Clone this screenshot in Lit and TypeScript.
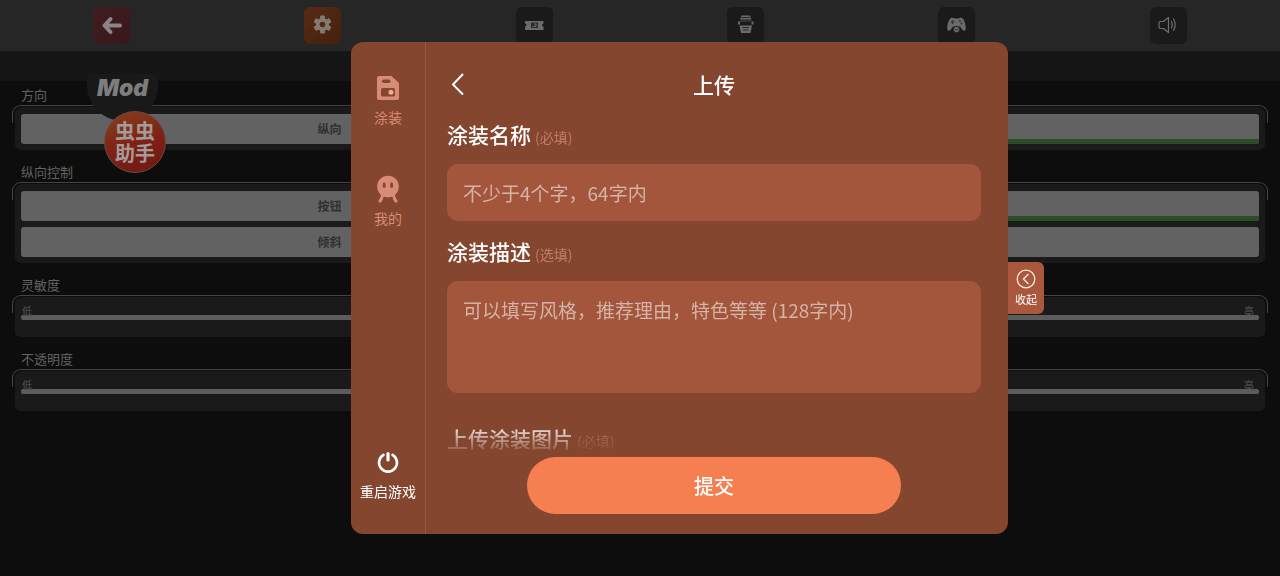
import { LitElement, html, css, svg, nothing } from "lit";
import { customElement, property } from "lit/decorators.js";
import { classMap } from "lit/directives/class-map.js";

const reset = css`
  * { box-sizing: border-box; }
  button, input, textarea {
    font: inherit;
    color: inherit;
    border: 0;
    margin: 0;
    padding: 0;
    background: none;
  }
  button { cursor: pointer; }
  svg { display: block; }
`;

type Tool = { id: string; label: string; tone: string; icon: unknown };

const tools: Tool[] = [
  {
    id: "back", label: "返回", tone: "red",
    icon: svg`<path d="M17.500 12 L11.500 18.500 L17.500 25 M12.500 18.500 H27" fill="none" stroke="#8c8585" stroke-width="4" stroke-linecap="round" stroke-linejoin="round"/>`,
  },
  {
    id: "settings", label: "设置", tone: "orange",
    icon: svg`<g transform="translate(18.500 17.500)" fill="#857a73">
      <circle r="6.500"/>
      ${[0, 60, 120, 180, 240, 300].map((a) => svg`<rect x="-2.400" y="-9" width="4.800" height="5" rx="1.200" transform="rotate(${a})"/>`)}
      <circle r="2.800" fill="#4f2a14"/></g>`,
  },
  {
    id: "ticket", label: "关卡", tone: "plain",
    icon: svg`<path d="M9 14h18.500v2.500a1.500 1.500 0 0 0 0 3V23H9v-3.500a1.500 1.500 0 0 0 0-3z" fill="#6b6b6b"/><rect x="15" y="15.500" width="7" height="5.500" fill="#2c2c2c"/><path d="M16.500 19.500h3.500v-2.500h-2" fill="none" stroke="#6b6b6b" stroke-width="1"/>`,
  },
  {
    id: "vehicle", label: "车辆", tone: "plain",
    icon: svg`<g fill="#6b6b6b"><path d="M14.500 8.500h8.500l1.500 4H13z"/><path d="M11 14.500h2v3h-2z M24.500 14.500h2v3h-2z"/><path d="M13 13.500h11.500v1H13z" opacity=".6"/><path d="M12.500 18.500h12.500l-1.500 7.500h-9.500z"/></g><path d="M14 10.500h9.500M15.500 20.500h6.500M16 23h5.500" stroke="#2a2a2a"/>`,
  },
  {
    id: "control", label: "操控", tone: "plain",
    icon: svg`<path d="M13 11c2-1 3 .5 5.500.5S22 10 24 11c2.500 1 4.500 9 3.500 12-1 2-4-.500-5.500-3.500h-7C13.500 22.500 10.500 25 9.500 23c-1-3 1-11 3.500-12z" fill="#6b6b6b"/><path d="M12.500 15h4M14.500 13v4" stroke="#333" stroke-width="1.200"/><circle cx="22" cy="14" r="1" fill="#333"/><circle cx="23.500" cy="16.500" r="1" fill="#333"/><circle cx="18.500" cy="22.500" r="3.200" fill="#6b6b6b" stroke="#1d1d1d"/><path d="M17 22.500h3" stroke="#333"/>`,
  },
  {
    id: "sound", label: "声音", tone: "plain",
    icon: svg`<g fill="none" stroke="#6f6f6f" stroke-width="1.200" stroke-linejoin="round" stroke-linecap="round"><path d="M18.500 10.500l-5 4H10.500a1.500 1.500 0 0 0-1.500 1.500v4a1.500 1.500 0 0 0 1.500 1.500h3l5 4z"/><path d="M21.500 14.500c1 2 1 4.500 0 6.500M23.500 12c2 3.500 2 8 0 11.500"/></g>`,
  },
];

@customElement("option-group")
class OptionGroup extends LitElement {
  @property() heading = "";
  @property({ attribute: false }) rows: { label: string; other: string; picked: boolean }[] = [];
  @property({ type: Boolean }) slider = false;

  static styles = [reset, css`
    :host { display: block; }
    .heading {
      margin: 0;
      padding: 0 9px;
      height: 32px;
      display: flex;
      align-items: flex-end;
      font-size: 13px;
      font-weight: 400;
      line-height: 20px;
      color: #626262;
    }
    .frame { position: relative; padding: 0 3px; }
    .frame::before {
      content: "";
      position: absolute;
      inset: 0 0 auto;
      height: 17px;
      border: 1px solid #444;
      border-bottom: 0;
      border-radius: 9px 9px 0 0;
    }
    .panel {
      border: 2px solid transparent;
      border-width: 2px 0 0;
      background: #1a1a1a padding-box;
      border-radius: 8px 8px 5px 5px;
      padding: 7px 6px 6px;
      display: grid;
      gap: 6px;
    }
    .row {
      display: grid;
      grid-template-columns: 1fr 1fr;
      column-gap: 4px;
      height: 30px;
      border-radius: 3px;
      overflow: hidden;
      background: #626262;
    }
    .choice { font-size: 12px; font-weight: 700; line-height: 30px; color: #303030; }
    .picked { border-bottom: 5px solid #2f4b28; }
    .range { display: block; height: 27px; }
    .ends {
      display: flex;
      justify-content: space-between;
      padding: 0 1px;
      height: 11px;
      font-size: 10px;
      font-weight: 500;
      line-height: 14px;
      color: #4b4b4b;
    }
    .high { padding-right: 4px; }
    .track {
      display: block;
      width: 100%;
      height: 5px;
      appearance: none;
      background: #5c5c5c;
      border-radius: 2px;
    }
    .track::-webkit-slider-thumb {
      appearance: none;
      width: 14px;
      height: 14px;
      border-radius: 50%;
      background: #626262;
    }
  `];

  render() {
    return html`
      <h2 class="heading">${this.heading}</h2>
      <div class="frame"><div class="panel">
        ${this.rows.map((r) => html`<div class="row">
          <button class="choice">${r.label}</button>
          <button class=${classMap({ choice: true, picked: r.picked })} aria-label=${r.other}></button>
        </div>`)}
        ${this.slider ? html`<label class="range">
          <span class="ends"><span>低</span><span class="high">高</span></span>
          <input class="track" type="range" min="0" max="100" value="50" aria-label=${this.heading}>
        </label>` : nothing}
      </div></div>`;
  }
}

@customElement("game-settings")
class GameSettings extends LitElement {
  static styles = [reset, css`
    :host { display: block; min-height: 100vh; background: #0d0d0d; }
    .bar {
      display: grid;
      grid-template-columns: repeat(6, 1fr);
      justify-items: center;
      align-items: center;
      height: 51px;
      padding: 0 6px;
      background: #262626;
    }
    .tool { width: 37px; height: 37px; border-radius: 6px; background: #1a1a1a; }
    .red { background: linear-gradient(135deg, #421d20, #38171a); }
    .orange { background: linear-gradient(135deg, #582c14, #43200e); }
    .band { height: 30px; background: #151515; }
    .list { padding: 0 12px; margin-top: -8px; position: relative; }
    .logo { position: absolute; left: 87px; top: 50px; width: 80px; }
    .mod {
      width: 71px;
      height: 71px;
      padding-top: 4px;
      border-radius: 50%;
      background: #191919;
      display: grid;
      place-items: center;
      clip-path: inset(24px 0 0);
      font: italic 900 23px/28px Inter, sans-serif;
      color: #7d7d7d;
    }
    .helper {
      position: absolute;
      left: 17px;
      top: 61px;
      width: 62px;
      height: 62px;
      border: 1px solid #6b4a40;
      border-radius: 50%;
      background: linear-gradient(160deg, #87401c, #7e2015 55%, #701812);
      display: grid;
      place-content: center;
      font-size: 20px;
      font-weight: 700;
      line-height: 22px;
      color: #a39b99;
    }
  `];

  render() {
    return html`
      <nav class="bar">
        ${tools.map((t) => html`<button class="tool ${t.tone}" aria-label=${t.label}>
          <svg width="37" height="37" viewBox="0 0 37 37">${t.icon}</svg></button>`)}
      </nav>
      <div class="band"></div>
      <main class="list">
        <option-group heading="方向" .rows=${[{ label: "纵向", other: "横向", picked: true }]}></option-group>
        <option-group heading="纵向控制" .rows=${[
          { label: "按钮", other: "滑块", picked: true },
          { label: "倾斜", other: "方向盘", picked: false },
        ]}></option-group>
        <option-group heading="灵敏度" slider></option-group>
        <option-group heading="不透明度" slider></option-group>
      </main>
      <div class="logo">
        <div class="mod">Mod</div>
        <div class="helper"><span>虫虫</span><span>助手</span></div>
      </div>`;
  }
}

@customElement("upload-dialog")
class UploadDialog extends LitElement {
  static styles = [reset, css`
    :host {
      position: fixed;
      inset: 0;
      display: flex;
      justify-content: center;
      padding: 42px 0 42px 79px;
    }
    .dialog {
      position: relative;
      display: flex;
      width: 100%;
      max-width: 657px;
      background: #84462f;
      border-radius: 12px;
    }
    .side {
      flex: none;
      width: 75px;
      display: flex;
      flex-direction: column;
      align-items: center;
      gap: 47px;
      padding: 32px 0;
      border-right: 1px solid #9c563e;
    }
    .item {
      display: grid;
      justify-items: center;
      gap: 4px;
      font-size: 14px;
      line-height: 22px;
      color: #d98c75;
    }
    .restart { margin-top: auto; gap: 6px; color: #fff; white-space: nowrap; }
    .content {
      flex: 1;
      min-width: 0;
      display: flex;
      flex-direction: column;
      padding: 27px 27px 20px 21px;
      color: #fff;
    }
    .head {
      display: grid;
      grid-template-columns: 30px 1fr 30px;
      align-items: center;
      margin-bottom: 20px;
    }
    .title {
      margin: 0;
      text-align: center;
      font-size: 21px;
      font-weight: 500;
      line-height: 30px;
    }
    .form {
      flex: 1;
      min-height: 0;
      overflow: hidden;
      display: flex;
      flex-direction: column;
      mask-image: linear-gradient(to top, transparent 2px, #000 34px);
    }
    .caption {
      display: flex;
      align-items: baseline;
      gap: 4px;
      margin-bottom: 15px;
      font-size: 21px;
      font-weight: 500;
      line-height: 30px;
    }
    .hint { font-size: 14px; font-weight: 400; line-height: 20px; color: #c17c67; }
    .field {
      flex: none;
      display: block;
      width: 100%;
      height: 57px;
      margin-bottom: 15px;
      padding: 0 16px;
      border-radius: 11px;
      background: #a3563c;
      font-size: 19px;
      line-height: 28px;
    }
    .area { height: 112px; margin-bottom: 30px; padding: 15px 16px; resize: none; }
    .field::placeholder { color: #d5b3a6; opacity: 1; }
    .submit {
      align-self: center;
      width: 70%;
      height: 57px;
      border-radius: 29px;
      background: #f67f51;
      font-size: 20px;
      font-weight: 500;
    }
    .collapse {
      position: absolute;
      left: 100%;
      top: 50%;
      transform: translateY(-50%);
      width: 36px;
      height: 52px;
      display: grid;
      justify-items: center;
      align-content: center;
      gap: 2px;
      border-radius: 0 6px 6px 0;
      background: #a9583d;
      color: #fff;
      font-size: 11px;
      line-height: 16px;
    }
  `];

  render() {
    return html`
      <section class="dialog" role="dialog" aria-labelledby="title">
        <nav class="side">
          <button class="item">
            <svg width="24" height="28" viewBox="0 0 24 28">
              <path d="M3 2h12.500L23 9v15a2 2 0 0 1-2 2H3a2 2 0 0 1-2-2V4a2 2 0 0 1 2-2z" fill="#d98c75"/>
              <rect x="6" y="5.500" width="8.500" height="3.500" rx="1.700" fill="#84462f"/>
              <rect x="5" y="14" width="14" height="8.500" rx="1.500" fill="#84462f"/>
              <circle cx="15" cy="18.200" r="2.500" fill="#f5a78f"/>
            </svg>
            <span>涂装</span>
          </button>
          <button class="item">
            <svg width="24" height="28" viewBox="0 0 24 28">
              <path d="M6.500 20c-.500 3.500-1.500 5.500-3.500 7M17.500 20c.500 3.500 1.500 5.500 3.500 7" stroke="#d98c75" stroke-width="2.800" fill="none"/>
              <circle cx="12" cy="11.500" r="10.800" fill="#d98c75"/>
              <rect x="6.800" y="7.500" width="2.800" height="5.500" rx="1.400" fill="#84462f"/>
              <rect x="14.200" y="7.500" width="2.800" height="5.500" rx="1.400" fill="#84462f"/>
            </svg>
            <span>我的</span>
          </button>
          <button class="item restart">
            <svg width="24" height="24" viewBox="0 0 24 24" fill="none" stroke="#fff" stroke-linecap="round">
              <path d="M7.500 4.800a9 9 0 1 0 9 0" stroke-width="2.600"/>
              <path d="M12 3.500v6.500" stroke-width="3.200"/>
            </svg>
            <span>重启游戏</span>
          </button>
        </nav>
        <div class="content">
          <header class="head">
            <button class="back" aria-label="返回">
              <svg width="22" height="24" viewBox="0 0 22 24"><path d="M16 2L6 12.500l10 10" fill="none" stroke="#fff" stroke-width="2"/></svg>
            </button>
            <h1 class="title" id="title">上传</h1>
          </header>
          <form class="form" id="form">
            <label class="caption" for="name">涂装名称<span class="hint">(必填)</span></label>
            <input class="field" id="name" type="text" placeholder="不少于4个字，64字内">
            <label class="caption" for="about">涂装描述<span class="hint">(选填)</span></label>
            <textarea class="field area" id="about" placeholder="可以填写风格，推荐理由，特色等等 (128字内)"></textarea>
            <div class="caption">上传涂装图片<span class="hint">(必填)</span></div>
          </form>
          <button class="submit" type="submit" form="form">提交</button>
        </div>
        <button class="collapse">
          <svg width="20" height="20" viewBox="0 0 20 20" fill="none" stroke="#ffe9df" stroke-width="1.300">
            <circle cx="10" cy="10" r="8.800"/><path d="M12.500 5L7.500 10l5 5"/>
          </svg>
          <span>收起</span>
        </button>
      </section>`;
  }
}

@customElement("app-root")
class AppRoot extends LitElement {
  static styles = css`
    :host {
      display: block;
      min-height: 100vh;
      font-family: "Noto Sans CJK SC", sans-serif;
    }
  `;
  render() {
    return html`<game-settings></game-settings><upload-dialog></upload-dialog>`;
  }
}
